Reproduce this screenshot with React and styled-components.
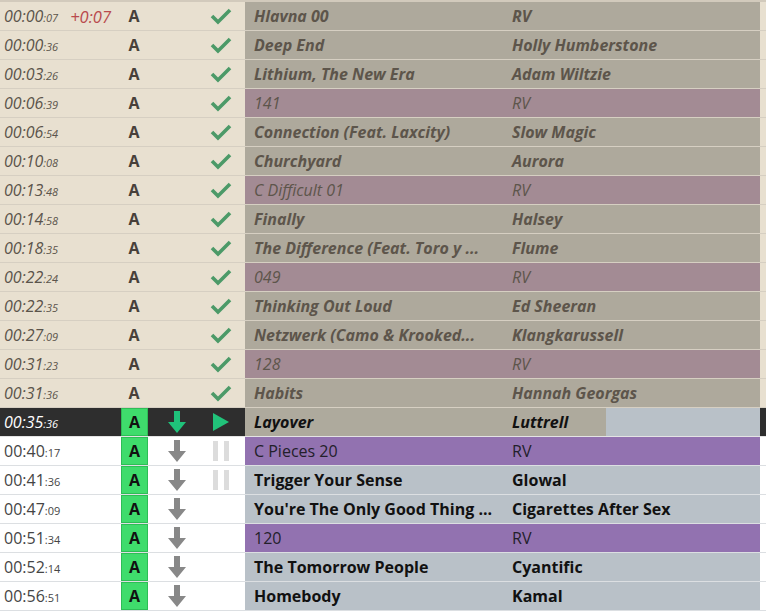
import React from 'react';
import styled, { createGlobalStyle, css } from 'styled-components';

const Global = createGlobalStyle`
  html, body {
    margin: 0;
    padding: 0;
    background: #fff;
  }
  body {
    font-family: "Open Sans", "Noto Sans", sans-serif;
  }
`;

const rows = [
  { time: '00:00', sec: '07', diff: '+0:07', title: 'Hlavna 00', artist: 'RV' },
  { time: '00:00', sec: '36', title: 'Deep End', artist: 'Holly Humberstone' },
  { time: '00:03', sec: '26', title: 'Lithium, The New Era', artist: 'Adam Wiltzie' },
  { time: '00:06', sec: '39', title: '141', artist: 'RV', spot: true },
  { time: '00:06', sec: '54', title: 'Connection (Feat. Laxcity)', artist: 'Slow Magic' },
  { time: '00:10', sec: '08', title: 'Churchyard', artist: 'Aurora' },
  { time: '00:13', sec: '48', title: 'C Difficult 01', artist: 'RV', spot: true },
  { time: '00:14', sec: '58', title: 'Finally', artist: 'Halsey' },
  { time: '00:18', sec: '35', title: 'The Difference (Feat. Toro y ...', artist: 'Flume' },
  { time: '00:22', sec: '24', title: '049', artist: 'RV', spot: true },
  { time: '00:22', sec: '35', title: 'Thinking Out Loud', artist: 'Ed Sheeran' },
  { time: '00:27', sec: '09', title: 'Netzwerk (Camo & Krooked...', artist: 'Klangkarussell' },
  { time: '00:31', sec: '23', title: '128', artist: 'RV', spot: true },
  { time: '00:31', sec: '36', title: 'Habits', artist: 'Hannah Georgas' },
  { time: '00:35', sec: '36', title: 'Layover', artist: 'Luttrell', active: true, progress: 70.1 },
  { time: '00:40', sec: '17', title: 'C Pieces 20', artist: 'RV', spot: true, pause: true },
  { time: '00:41', sec: '36', title: 'Trigger Your Sense', artist: 'Glowal', pause: true },
  { time: '00:47', sec: '09', title: "You're The Only Good Thing ...", artist: 'Cigarettes After Sex' },
  { time: '00:51', sec: '34', title: '120', artist: 'RV', spot: true },
  { time: '00:52', sec: '14', title: 'The Tomorrow People', artist: 'Cyantific' },
  { time: '00:56', sec: '51', title: 'Homebody', artist: 'Kamal' },
];

const List = styled.div`
  width: 766px;
  border-top: 2px solid #d2cabc;
`;

const Row = styled.div`
  display: grid;
  grid-template-columns: 120px 28px 57px 40px 515px 6px;
  height: 28px;
  border-bottom: 1px solid #d6cfc2;
  background: #e8e0d0;

  ${p => p.$state === 'active' && css`
    background: #2e2e2e;
    border-bottom-color: #e4e4e4;
  `}
  ${p => p.$state === 'next' && css`
    background: #fff;
    border-bottom-color: #dcdfe2;
  `}
`;

const Time = styled.div`
  display: flex;
  align-items: center;
  padding-left: 4px;
  font-size: 16px;
  white-space: nowrap;
  color: ${p => (p.$state === 'active' ? '#fff' : p.$state === 'next' ? '#454545' : '#5b544b')};
  font-style: ${p => (p.$state === 'next' ? 'normal' : 'italic')};

  small {
    font-size: 11px;
    margin-top: 3px;
  }
`;

const Diff = styled.span`
  margin-left: 12px;
  color: #b94a4d;
  font-style: italic;
  font-size: 16.5px;
`;

const Source = styled.div`
  display: flex;
  align-items: center;
  justify-content: center;
  font-weight: 700;
  font-size: 16px;
  color: ${p => (p.$boxed ? '#111' : '#47403a')};
  ${p => p.$boxed && css`
    background: #3fdc6c;
    border: 1px solid #2ebd56;
    margin-left: 1px;
  `}
`;

const IconCell = styled.div`
  display: flex;
  align-items: center;
  justify-content: center;
  padding-right: ${p => p.$shift || 0}px;
  svg { display: block; }
`;

const Track = styled.div`
  display: grid;
  grid-template-columns: 258px 1fr;
  align-items: center;
  font-size: 16px;
  ${p => p.$state === 'played' && css`
    background: ${p.$spot ? '#a38b94' : '#aea99c'};
    color: #5d554b;
    font-style: italic;
    font-weight: ${p.$spot ? 400 : 700};
  `}
  ${p => p.$state === 'active' && css`
    background: linear-gradient(to right, #aeaa9d ${p.$progress}%, #b9c1c8 ${p.$progress}%);
    color: #111;
    font-style: italic;
    font-weight: 700;
  `}
  ${p => p.$state === 'next' && css`
    background: ${p.$spot ? '#9272b0' : '#b9c1c8'};
    color: ${p.$spot ? '#23202a' : '#111'};
    font-weight: ${p.$spot ? 400 : 700};
  `}
`;

const Cell = styled.span`
  padding-left: 9px;
  overflow: hidden;
  white-space: nowrap;
  text-overflow: clip;
`;

const Check = () => (
  <svg width="22" height="18" viewBox="0 0 22 18">
    <polyline points="2,9 8,15 20,3" fill="none" stroke="#4c9a68" strokeWidth="3.6" />
  </svg>
);

const Arrow = ({ color }) => (
  <svg width="18" height="22" viewBox="0 0 18 22">
    <polygon points="6,0 12,0 12,11 18,11 9,22 0,11 6,11" fill={color} />
  </svg>
);

const Play = () => (
  <svg width="16" height="18" viewBox="0 0 16 18">
    <polygon points="0,0 16,9 0,18" fill="#21c37a" />
  </svg>
);

const Pause = () => (
  <svg width="16" height="20" viewBox="0 0 16 20">
    <rect x="0" y="0" width="5" height="20" fill="#dcdcdc" />
    <rect x="11" y="0" width="5" height="20" fill="#dcdcdc" />
  </svg>
);

function PlaylistRow({ row, state }) {
  return (
    <Row $state={state}>
      <Time $state={state}>
        {row.time}
        <small>:{row.sec}</small>
        {row.diff && <Diff>{row.diff}</Diff>}
      </Time>
      <Source $boxed={state !== 'played'}>A</Source>
      <IconCell>
        {state === 'active' && <Arrow color="#1fc27a" />}
        {state === 'next' && <Arrow color="#888" />}
      </IconCell>
      <IconCell $shift={8}>
        {state === 'played' && <Check />}
        {state === 'active' && <Play />}
        {row.pause && <Pause />}
      </IconCell>
      <Track $state={state} $spot={row.spot} $progress={row.progress}>
        <Cell>{row.title}</Cell>
        <Cell>{row.artist}</Cell>
      </Track>
      <div />
    </Row>
  );
}

export default function App() {
  const activeIndex = rows.findIndex(r => r.active);
  return (
    <>
      <Global />
      <List>
        {rows.map((row, i) => (
          <PlaylistRow
            key={i}
            row={row}
            state={i < activeIndex ? 'played' : i === activeIndex ? 'active' : 'next'}
          />
        ))}
      </List>
    </>
  );
}
